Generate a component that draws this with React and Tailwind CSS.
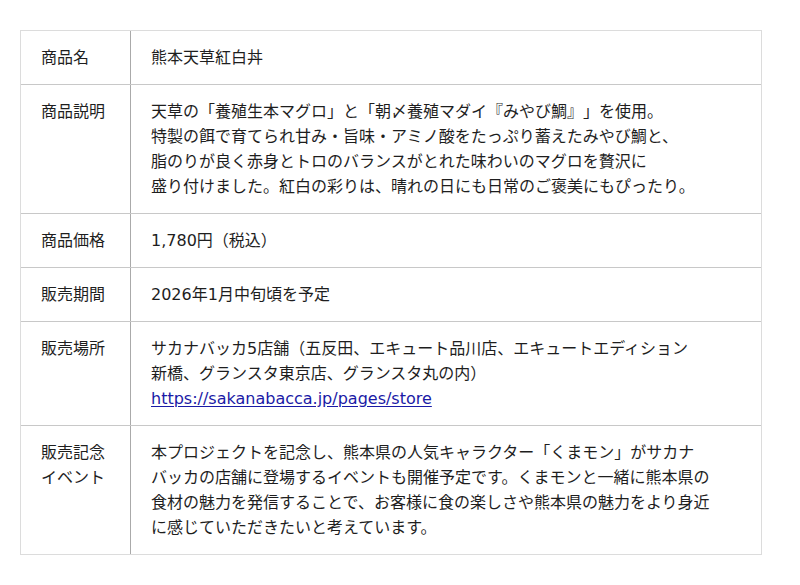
import React from "react";

const rows = [
  { label: ["商品名"], content: [["熊本天草紅白丼"]] },
  {
    label: ["商品説明"],
    content: [
      ["天草の「養殖生本マグロ」と「朝〆養殖マダイ『みやび鯛』」を使用。"],
      ["特製の餌で育てられ甘み・旨味・アミノ酸をたっぷり蓄えたみやび鯛と、"],
      ["脂のりが良く赤身とトロのバランスがとれた味わいのマグロを贅沢に"],
      ["盛り付けました。紅白の彩りは、晴れの日にも日常のご褒美にもぴったり。"],
    ],
  },
  { label: ["商品価格"], content: [["1,780円（税込）"]] },
  { label: ["販売期間"], content: [["2026年1月中旬頃を予定"]] },
  {
    label: ["販売場所"],
    content: [
      ["サカナバッカ5店舗（五反田、エキュート品川店、エキュートエディション"],
      ["新橋、グランスタ東京店、グランスタ丸の内）"],
      ["__link__"],
    ],
  },
  {
    label: ["販売記念", "イベント"],
    content: [
      ["本プロジェクトを記念し、熊本県の人気キャラクター「くまモン」がサカナ"],
      ["バッカの店舗に登場するイベントも開催予定です。くまモンと一緒に熊本県の"],
      ["食材の魅力を発信することで、お客様に食の楽しさや熊本県の魅力をより身近"],
      ["に感じていただきたいと考えています。"],
    ],
  },
];

export default function App() {
  return (
    <div
      className="bg-white w-[800px] h-[585px] pt-[30px] pl-[20px] text-[#1e1e1e] text-[16px] leading-[25px] [text-spacing-trim:space-all]"
      style={{ fontFamily: '"DejaVu Sans", "Noto Sans CJK JP", sans-serif' }}
    >
      <div className="w-[742px] border border-[#dcdcdc]">
        {rows.map((r, i) => (
          <div
            key={i}
            className={`flex ${i > 0 ? "border-t border-[#c8c8c8]" : ""}`}
          >
            <div className="w-[110px] shrink-0 border-r border-[#aaaaaa] py-[14px] pl-[20px]">
              {r.label.map((l, j) => (
                <div key={j} className="whitespace-nowrap">{l}</div>
              ))}
            </div>
            <div className="flex-1 py-[14px] pl-[20px]">
              {r.content.map((line, j) =>
                line[0] === "__link__" ? (
                  <div key={j}>
                    <a
                      href="#"
                      className="text-[#1a1aa6] underline underline-offset-2"
                    >
                      https://sakanabacca.jp/pages/store
                    </a>
                  </div>
                ) : (
                  <div key={j} className="whitespace-nowrap">{line[0]}</div>
                )
              )}
            </div>
          </div>
        ))}
      </div>
    </div>
  );
}
